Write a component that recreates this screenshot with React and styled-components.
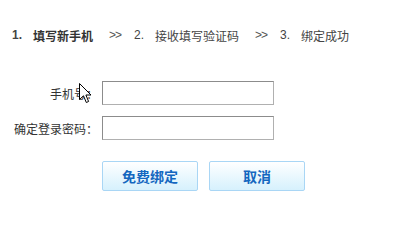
import React from 'react';
import styled, { createGlobalStyle } from 'styled-components';

const GlobalStyle = createGlobalStyle`
  html, body {
    margin: 0;
    padding: 0;
    background: #fff;
  }
  body {
    font-family: "Liberation Sans", "Noto Sans CJK SC", sans-serif;
    font-size: 12px;
    color: #333;
  }
`

const Page = styled.div`
  position: relative;
  width: 400px;
  height: 210px;
  padding-top: 25px;
  box-sizing: border-box;
`

const Steps = styled.div`
  display: flex;
  align-items: center;
  height: 20px;
  padding-left: 12px;
  color: #444;
`

const StepNum = styled.span`
  display: inline-block;
  width: 21px;
  font-weight: ${p => (p.active ? 'bold' : 'normal')};
`

const StepLabel = styled.span`
  font-weight: ${p => (p.active ? 'bold' : 'normal')};
  color: ${p => (p.active ? '#333' : '#444')};
`

const Arrow = styled.span`
  display: inline-block;
  width: 25px;
  margin-left: 16px;
  letter-spacing: -1px;
  color: #555;
`

const Form = styled.div`
  display: grid;
  grid-template-columns: 98px 172px;
  column-gap: 4px;
  row-gap: 11px;
  margin-top: 36px;
  align-items: center;
`

const Label = styled.label`
  text-align: right;
  color: #333;
  font-size: 12px;
`

const Input = styled.input`
  box-sizing: border-box;
  width: 172px;
  height: 24px;
  margin: 0;
  border: 1px solid #b0b0b0;
  border-top-color: #8c8c8c;
  border-left-color: #8c8c8c;
  outline: none;
  background: #fff;
`

const Buttons = styled.div`
  display: flex;
  gap: 11px;
  margin-top: 21px;
  padding-left: 102px;
`

const Button = styled.button`
  box-sizing: border-box;
  width: 96px;
  height: 30px;
  border: 1px solid #a9d6f5;
  border-radius: 2px;
  background: linear-gradient(to bottom, #ffffff 0%, #eef9fe 40%, #d6f1fd 100%);
  color: #1467c0;
  font-family: "Noto Sans CJK SC", sans-serif;
  font-size: 14px;
  font-weight: bold;
  cursor: pointer;
  padding: 0;
`

const Cursor = styled.svg`
  position: absolute;
  left: 79px;
  top: 83px;
  pointer-events: none;
`

const steps = ['填写新手机', '接收填写验证码', '绑定成功']

export default function App() {
  return (
    <Page>
      <GlobalStyle />
      <Steps>
        {steps.map((s, i) => (
          <React.Fragment key={s}>
            <StepNum active={i === 0}>{i + 1}.</StepNum>
            <StepLabel active={i === 0}>{s}</StepLabel>
            {i < steps.length - 1 && <Arrow>&gt;&gt;</Arrow>}
          </React.Fragment>
        ))}
      </Steps>
      <Form>
        <Label>手机号：</Label>
        <Input type="text" />
        <Label>确定登录密码：</Label>
        <Input type="password" />
      </Form>
      <Buttons>
        <Button>免费绑定</Button>
        <Button>取消</Button>
      </Buttons>
      <Cursor width="13" height="21" viewBox="0 0 13 21">
        <path d="M0.5 0.5 L0.5 16.5 L4.5 12.8 L7.3 19.5 L9.6 18.5 L6.9 12 L12 12 Z" fill="#fff" stroke="#000" strokeWidth="1" />
      </Cursor>
    </Page>
  );
}
